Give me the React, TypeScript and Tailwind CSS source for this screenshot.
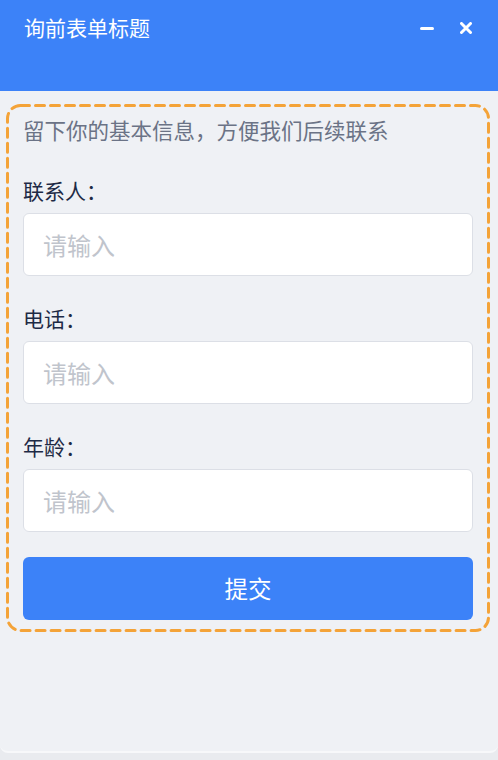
import React from "react";

const fields = ["联系人", "电话", "年龄"];

const App: React.FC = () => {
  return (
    <div
      className="min-h-[760px] w-[498px] bg-[#e9ebef]"
      style={{ fontFamily: '"Noto Sans CJK SC", "Noto Sans", sans-serif' }}
    >
      <div className="flex h-[753px] flex-col overflow-hidden rounded-b-[8px] border-b-2 border-[#f7f8fa] bg-[#eff1f5]">
        <div className="flex h-[91px] shrink-0 items-start justify-between bg-[#3c82f8] pl-6 pr-[26px] pt-[12px]">
          <span className="text-[21px] leading-[30px] text-white">询前表单标题</span>
          <div className="flex items-center gap-[26px] pt-[10px]">
            <span className="block h-[3px] w-[14px] rounded-full bg-white" />
            <svg width="12" height="12" viewBox="0 0 12 12">
              <path d="M1.5 1.5 L10.5 10.5 M10.5 1.5 L1.5 10.5" stroke="white" strokeWidth="3" strokeLinecap="round" />
            </svg>
          </div>
        </div>

        {/* dashed frame drawn with svg so the dash length matches */}
        <div className="relative ml-[6px] mr-[8px] mt-[13px] border-[3px] border-transparent px-[14px] pb-[9px] pt-[10px]">
          <svg className="pointer-events-none absolute -inset-[3px] h-[calc(100%+6px)] w-[calc(100%+6px)]">
            <rect
              x="1.5"
              y="1.5"
              width="calc(100% - 3px)"
              height="calc(100% - 3px)"
              rx="13"
              fill="none"
              stroke="#f4a338"
              strokeWidth="3"
              strokeDasharray="9 6"
              strokeLinecap="round"
            />
          </svg>
          <p className="whitespace-nowrap text-[21.5px] leading-[26px] text-[#6b7386]">
            留下你的基本信息，方便我们后续联系
          </p>
          {fields.map((f, i) => (
            <div key={f} className={i === 0 ? "mt-[34px]" : "mt-[29px]"}>
              <label className="block text-[21px] leading-[26px] text-[#1e2a45]">{f}：</label>
              <input
                placeholder="请输入"
                className="mt-[10px] block h-[63px] w-full rounded-[6px] border border-[#dcdfe6] bg-white px-[19px] text-[24px] text-[#333] outline-none placeholder:text-[#c0c4cc]"
              />
            </div>
          ))}
          <button className="mt-[25px] h-[63px] w-full rounded-[6px] bg-[#3c82f8] text-[23.5px] text-white">
            提交
          </button>
        </div>
      </div>
    </div>
  );
};

export default App;
